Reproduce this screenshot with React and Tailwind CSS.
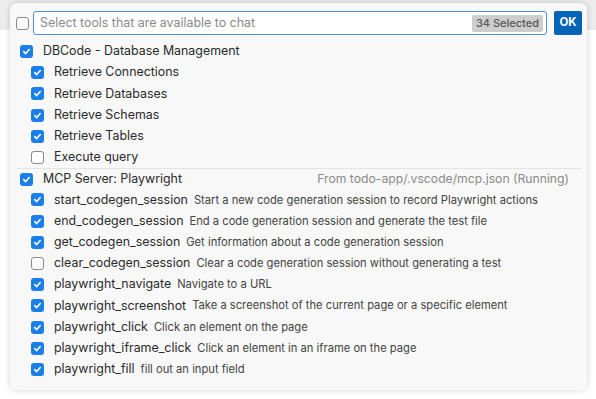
import React from "react";

function Box({ checked }) {
  if (checked) {
    return (
      <span className="flex h-[13px] w-[13px] shrink-0 items-center justify-center rounded-[3px] bg-[#1a7fe8]">
        <svg width="9" height="9" viewBox="0 0 10 10" fill="none">
          <path d="M2 5.2 L4.1 7.3 L8 2.8" stroke="#fff" strokeWidth="1.8" strokeLinecap="round" strokeLinejoin="round" />
        </svg>
      </span>
    );
  }
  return <span className="h-[13px] w-[13px] shrink-0 rounded-[3px] border border-[#8a8a8a] bg-white" />;
}

const db = [
  ["Retrieve Connections", true],
  ["Retrieve Databases", true],
  ["Retrieve Schemas", true],
  ["Retrieve Tables", true],
  ["Execute query", false],
];

const pw = [
  ["start_codegen_session", "Start a new code generation session to record Playwright actions", true],
  ["end_codegen_session", "End a code generation session and generate the test file", true],
  ["get_codegen_session", "Get information about a code generation session", true],
  ["clear_codegen_session", "Clear a code generation session without generating a test", false],
  ["playwright_navigate", "Navigate to a URL", true],
  ["playwright_screenshot", "Take a screenshot of the current page or a specific element", true],
  ["playwright_click", "Click an element on the page", true],
  ["playwright_iframe_click", "Click an element in an iframe on the page", true],
  ["playwright_fill", "fill out an input field", true],
];

export default function App() {
  return (
    <div
      className="h-[399px] w-[596px] overflow-hidden bg-[linear-gradient(to_bottom,#ececec_30px,#ffffff_30px)] pl-[10px] pt-[3px] text-[#2a2a2a] [font-family:Inter,'Noto_Sans',sans-serif]"
    >
      <div className="h-[387px] w-[577px] rounded-[7px] bg-[#f8f8f8] shadow-[0_0_6px_rgba(0,0,0,0.18)]">
        <div className="flex items-center pl-[6px] pt-[8px]">
          <Box checked={false} />
          <div className="ml-[4px] flex h-[24px] w-[514px] items-center rounded-[3px] border border-[#4b8fd6] bg-white pl-[6px] pr-[3px]">
            <span className="flex-1 text-[12.4px] text-[#8a8a8a]">Select tools that are available to chat</span>
            <span className="rounded-[2px] bg-[#cdcdcd] px-[4px] py-[1px] text-[11px] font-medium leading-[15px] text-[#555]">
              34 Selected
            </span>
          </div>
          <button className="ml-[7px] flex h-[24px] w-[28px] items-center justify-center rounded-[2px] bg-[#0664b8] text-[11.5px] font-bold text-white">
            OK
          </button>
        </div>
        <div className="mt-[6px]">
          <div className="flex h-[21.2px] items-center pl-[10px]">
            <Box checked />
            <span className="ml-[10px] text-[12.4px]">DBCode - Database Management</span>
          </div>
          {db.map(([n, c]) => (
            <div key={n} className="flex h-[21.2px] items-center pl-[21px]">
              <Box checked={c} />
              <span className="ml-[10px] text-[12.4px]">{n}</span>
            </div>
          ))}
          <div className="mx-[6px] flex h-[21.2px] items-center border-t border-[#e4e4e4] pl-[4px] pr-[12px]">
            <Box checked />
            <span className="ml-[10px] flex-1 text-[12.4px]">MCP Server: Playwright</span>
            <span className="text-[12.2px] text-[#8a8a8a]">From todo-app/.vscode/mcp.json (Running)</span>
          </div>
          {pw.map(([n, d, c]) => (
            <div key={n} className="flex h-[21.2px] items-center pl-[21px]">
              <Box checked={c} />
              <span className="ml-[10px] text-[12.4px]">{n}</span>
              <span className="ml-[6px] text-[11.2px] text-[#444]">{d}</span>
            </div>
          ))}
        </div>
      </div>
    </div>
  );
}
